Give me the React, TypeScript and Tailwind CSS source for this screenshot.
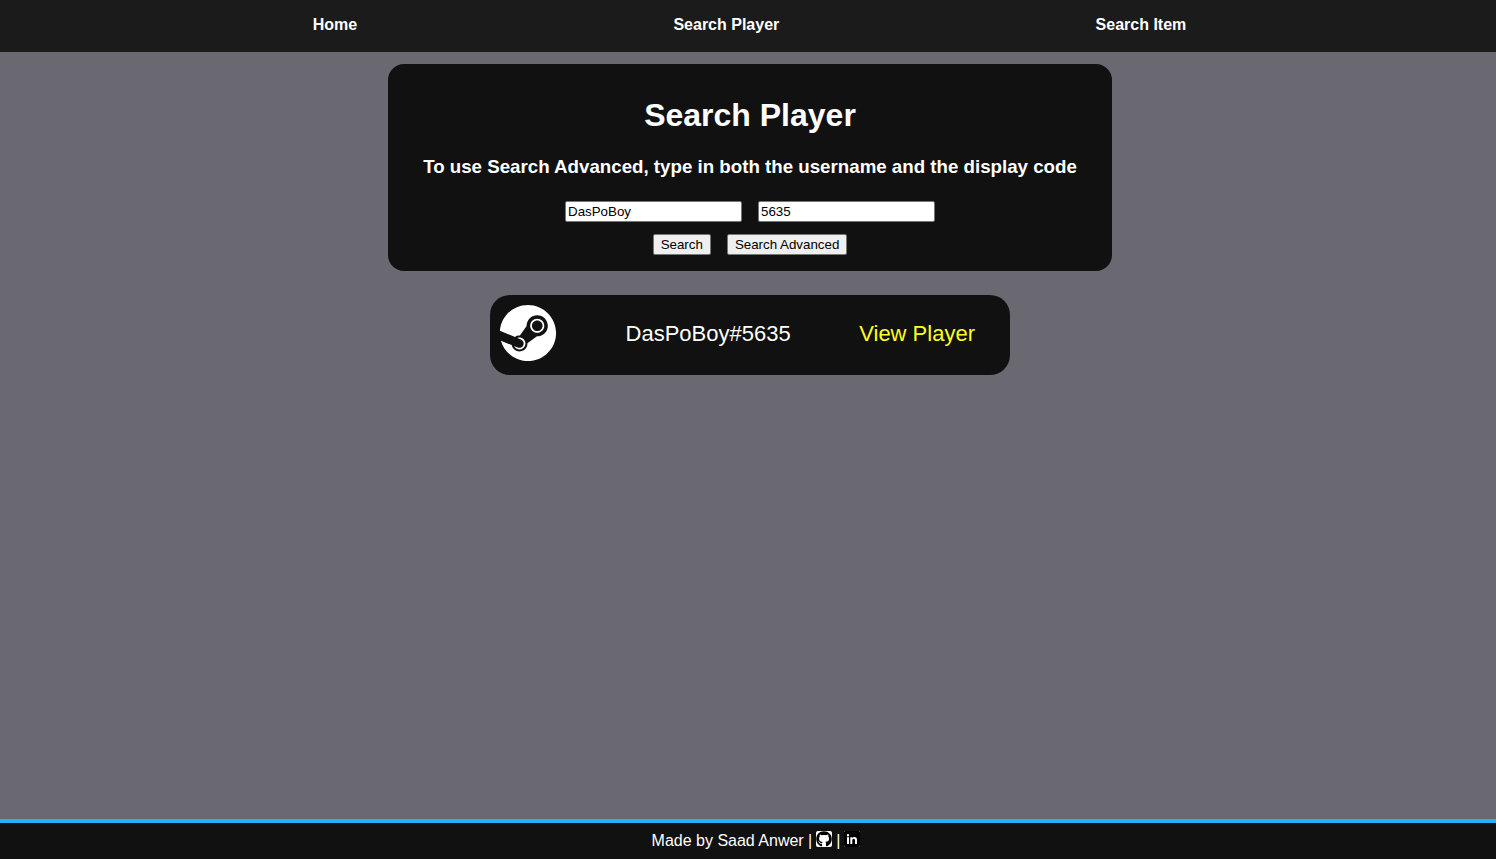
import { useState } from "react";
import { FaGithub, FaSteam } from "react-icons/fa";

const navLinks = ["Home", "Search Player", "Search Item"];

const inputClass =
  "h-[21px] w-[177px] rounded-[2px] border border-[#767676] bg-white px-[2px] [font-size:smaller] text-black";
const buttonClass =
  "flex h-[21px] items-center rounded-[2px] border border-[#767676] bg-[#efefef] px-[7px] [font-size:smaller] text-black";

function NavBar() {
  return (
    <nav className="bg-[#1b1b1b]">
      <ul className="flex h-[52px] items-center justify-between pr-[20.7%] pb-[2px] pl-[20.9%] font-bold">
        {navLinks.map((label) => (
          <li key={label}>
            <a href="#">{label}</a>
          </li>
        ))}
      </ul>
    </nav>
  );
}

function SearchCard() {
  const [name, setName] = useState("DasPoBoy");
  const [code, setCode] = useState("5635");
  return (
    <form
      onSubmit={(e) => e.preventDefault()}
      className="flex w-full max-w-[724px] flex-col items-center rounded-2xl bg-[#111111] px-4 pt-[33px] pb-4 text-center"
    >
      <h1 className="text-[32px] leading-9 font-bold">Search Player</h1>
      <h3 className="mt-6 text-[1.17em] leading-5 font-bold">
        To use Search Advanced, type in both the username and the display code
      </h3>
      <div className="mt-6 flex flex-wrap justify-center gap-4">
        <input
          aria-label="Username"
          className={inputClass}
          value={name}
          onChange={(e) => setName(e.target.value)}
        />
        <input
          aria-label="Display code"
          className={inputClass}
          value={code}
          onChange={(e) => setCode(e.target.value)}
        />
      </div>
      <div className="mt-3 flex gap-4">
        <button type="submit" className={buttonClass}>
          Search
        </button>
        <button type="button" className={buttonClass}>
          Search Advanced
        </button>
      </div>
    </form>
  );
}

function PlayerResult() {
  return (
    <section className="mt-6 flex h-20 w-full max-w-[520px] items-center justify-between rounded-[20px] bg-[#111111] pr-[35px] pb-1 pl-[9px] text-[22px]">
      <FaSteam size={58} className="text-white" aria-label="Steam" />
      <p>DasPoBoy#5635</p>
      <a href="#" className="text-[#ffff22]">
        View Player
      </a>
    </section>
  );
}

function Footer() {
  return (
    <footer className="flex h-10 items-center justify-center gap-1 border-t-4 border-[#24b3fb] bg-[#111111] pl-4">
      <span>Made by Saad Anwer |</span>
      <a href="#" aria-label="GitHub" className="mb-1 rounded-[2px] bg-white text-black">
        <FaGithub size={16} />
      </a>
      <span>|</span>
      <a href="#" aria-label="LinkedIn" className="mb-1 bg-black">
        <svg viewBox="0 0 16 16" className="size-4">
          <path
            fill="#555"
            d="M0 0h1.500L0 1.500zM16 0v1.500L14.500 0zM0 16v-1.500L1.500 16zM16 16h-1.500L16 14.500z"
          />
          <path
            fill="#fff"
            d="M3 6.200h2V13H3zM4 3a1.200 1.200 0 1 1 0 2.400A1.200 1.200 0 0 1 4 3zM6.300 6.200h1.900v.9c.4-.7 1.100-1.100 2.100-1.100 2 0 2.700 1.200 2.700 3.200V13h-2V9.600c0-1.100-.3-1.900-1.200-1.900-1 0-1.500.700-1.500 1.900V13h-2z"
          />
        </svg>
      </a>
    </footer>
  );
}

export default function App() {
  return (
    <div className="flex min-h-screen flex-col bg-[#6a6972] font-['Liberation_Sans',Arial,sans-serif] text-base text-white">
      <NavBar />
      <main className="flex flex-1 flex-col items-center pt-3 pl-1">
        <SearchCard />
        <PlayerResult />
      </main>
      <Footer />
    </div>
  );
}
